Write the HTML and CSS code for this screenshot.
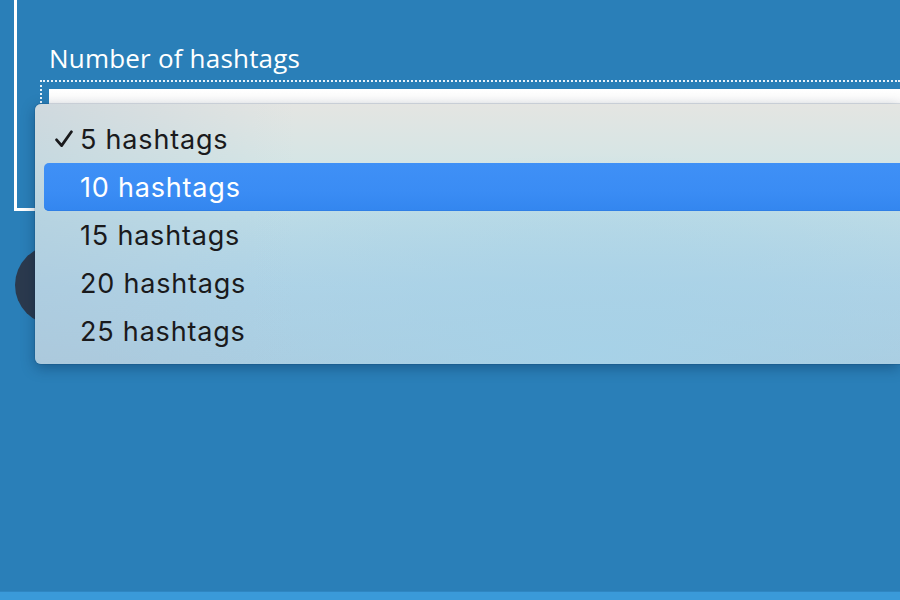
FILE: index.html
```html
<!DOCTYPE html>
<html>
<head>
<meta charset="utf-8">
<link rel="stylesheet" href="styles.css">
</head>
<body>
<div class="page">
  <main class="main">
    <section class="card">
      <label class="label">Number of hashtags</label>
      <div class="select-wrap">
        <div class="select"></div>
      </div>
    </section>
    <button class="round-btn" aria-label="Generate"></button>
  </main>
  <footer class="footer"></footer>
</div>
<ul class="menu">
  <li class="item checked">
    <svg class="check" viewBox="0 0 18 18" width="18" height="18"><path d="M1.6 9.8 L6.6 15.6 L16.4 1.8" fill="none" stroke="#1a1a1c" stroke-width="2.8" stroke-linecap="round" stroke-linejoin="round"/></svg>
    <span>5 hashtags</span>
  </li>
  <li class="item active"><span>10 hashtags</span></li>
  <li class="item"><span>15 hashtags</span></li>
  <li class="item"><span>20 hashtags</span></li>
  <li class="item"><span>25 hashtags</span></li>
</ul>
</body>
</html>
```
FILE: styles.css
```css
html, body {
  margin: 0;
  padding: 0;
}
body {
  width: 900px;
  height: 600px;
  overflow: hidden;
  background: #2a7fb8;
  position: relative;
  font-family: "Open Sans", "DejaVu Sans", sans-serif;
}
.page {
  height: 600px;
  display: flex;
  flex-direction: column;
}
.main {
  flex: 1;
  display: flex;
  flex-direction: column;
  align-items: stretch;
}
.card {
  margin-left: 14px;
  height: 208px;
  border-left: 3px solid #ffffff;
  border-bottom: 3px solid #ffffff;
  box-sizing: content-box;
  padding-left: 32px;
  display: flex;
  flex-direction: column;
}
.label {
  color: #ffffff;
  font-size: 26px;
  line-height: 30px;
  margin-top: 43px;
  letter-spacing: 0.2px;
}
.select-wrap {
  margin-top: 7px;
  margin-left: -9px;
  padding: 7px 0 7px 7px;
  border: 2px dotted #e8f2fa;
  border-right: none;
}
.select {
  height: 40px;
  background: linear-gradient(#ffffff, #f1f1f1);
  border-bottom: 1px solid #cfcfcf;
}
.round-btn {
  align-self: flex-start;
  margin-top: 34px;
  margin-left: 15px;
  width: 80px;
  height: 80px;
  border-radius: 50%;
  border: none;
  background: #2b3a4e;
  padding: 0;
}
.footer {
  height: 8px;
  background: #3a9ad9;
  border-top: 1px solid #2f86c2;
}
.menu {
  position: absolute;
  left: 35px;
  right: 0;
  top: 104px;
  height: 260px;
  margin: 0;
  padding: 11px 0 9px 9px;
  box-sizing: border-box;
  list-style: none;
  border-radius: 6px 0 0 6px;
  background:
    radial-gradient(ellipse 500px 200px at 560px 250px, rgba(166, 210, 232, 0.9), rgba(166, 210, 232, 0) 100%),
    linear-gradient(180deg, #e4e5e2 0%, #d5e5e5 22%, #bcdbe6 45%, #b0d3e6 70%, #acccdf 100%);
  box-shadow: 0 4px 14px rgba(0, 30, 60, 0.35), 0 0 0 1px rgba(0, 40, 80, 0.12);
  font-family: "Inter", "Liberation Sans", sans-serif;
}
.menu::before {
  content: "";
  position: absolute;
  inset: 0;
  border-radius: 6px 0 0 6px;
  background: linear-gradient(90deg, rgba(170, 195, 215, 0.35), rgba(170, 195, 215, 0) 30%);
  pointer-events: none;
}
.item {
  position: relative;
  height: 48px;
  display: flex;
  align-items: center;
  padding-left: 36px;
  font-size: 27px;
  color: #1a1a1c;
  letter-spacing: 0.8px;
  border-radius: 5px 0 0 5px;
}
.item.active {
  background: linear-gradient(180deg, #3f90f6 0%, #3a8cf4 60%, #3386ef 100%);
  color: #ffffff;
  box-shadow: inset 0 -1px 0 #2f7fe6;
}
.check {
  position: absolute;
  left: 11px;
  top: 15px;
}
```
